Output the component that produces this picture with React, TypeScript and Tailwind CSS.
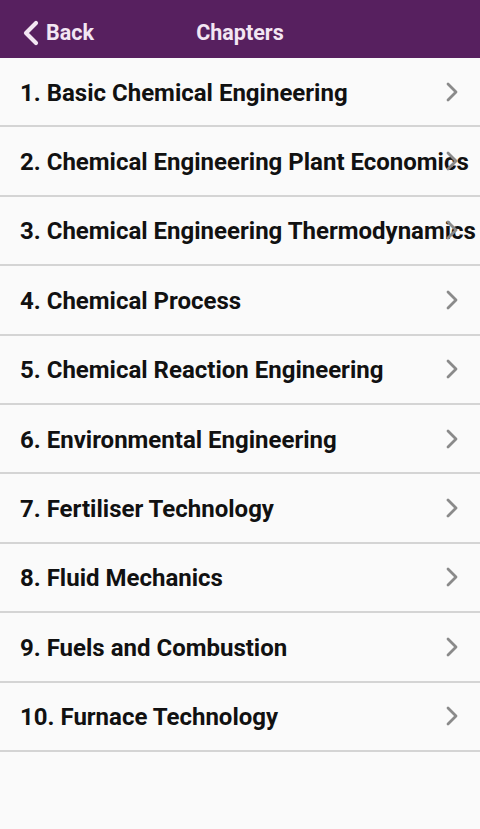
const chapters = [
  '1. Basic Chemical Engineering',
  '2. Chemical Engineering Plant Economics',
  '3. Chemical Engineering Thermodynamics',
  '4. Chemical Process',
  '5. Chemical Reaction Engineering',
  '6. Environmental Engineering',
  '7. Fertiliser Technology',
  '8. Fluid Mechanics',
  '9. Fuels and Combustion',
  '10. Furnace Technology',
];

const BackChevron = () => (
  <svg width="20" height="28" viewBox="0 0 20 28" fill="none" stroke="currentColor" strokeWidth="4.2" strokeLinecap="round" strokeLinejoin="round">
    <polyline points="15,4 5,14 15,24" />
  </svg>
);

const RowChevron = () => (
  <svg width="18" height="24" viewBox="0 0 18 24" fill="none" stroke="currentColor" strokeWidth="2.8" strokeLinecap="round" strokeLinejoin="round">
    <polyline points="5,4 13,12 5,20" />
  </svg>
);

const App = () => {
  return (
    <div className="w-[480px] h-[829px] bg-[#fafafa] overflow-hidden" style={{ fontFamily: 'Roboto, "Noto Sans", sans-serif' }}>
      <div className="h-[58px] bg-[#57205f] flex items-center relative text-[#f3e6f3] pt-[8px]">
        <div className="flex items-center pl-[21px]">
          <BackChevron />
          <span className="text-[21.5px] font-bold ml-[5px]">Back</span>
        </div>
        <span className="absolute left-0 right-0 top-[8px] bottom-0 flex items-center justify-center text-[21.5px] font-bold pointer-events-none">Chapters</span>
      </div>

      <div>
        {chapters.map((title) => (
          <div key={title} className="relative h-[69.4px] flex items-center pl-[20px] pt-[2px] border-b-2 border-[#d4d4d4] overflow-hidden">
            <span className="text-[24px] font-bold text-[#111] whitespace-nowrap">{title}</span>
            <div className="absolute right-[19px] top-1/2 -translate-y-1/2 text-[#8a8a8a]">
              <RowChevron />
            </div>
          </div>
        ))}
      </div>
    </div>
  );
};

export default App;
